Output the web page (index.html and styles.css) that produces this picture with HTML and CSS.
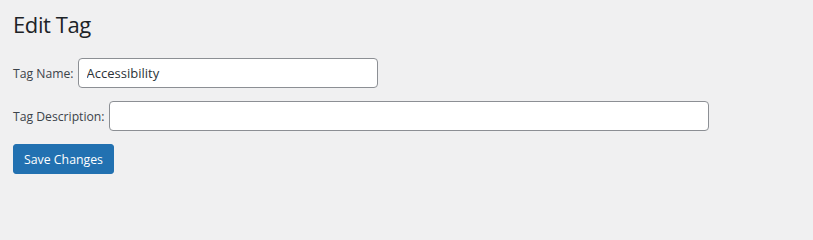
FILE: index.html
```html
<!DOCTYPE html>
<html>
<head>
<meta charset="utf-8">
<link rel="stylesheet" href="styles.css">
</head>
<body>
<div class="wrap">
  <h1 class="title">Edit Tag</h1>
  <form class="form">
    <div class="row">
      <label class="label" for="tag-name">Tag Name:</label>
      <input class="field field-name" id="tag-name" type="text" value="Accessibility">
    </div>
    <div class="row">
      <label class="label" for="tag-desc">Tag Description:</label>
      <input class="field field-desc" id="tag-desc" type="text" value="">
    </div>
    <div class="row">
      <button class="button-primary" type="button">Save Changes</button>
    </div>
  </form>
</div>
</body>
</html>
```

FILE: styles.css
```css
html, body {
  margin: 0;
  padding: 0;
  background: #f0f0f1;
}
body {
  font-family: "Open Sans", "Noto Sans", sans-serif;
  color: #3c434a;
  font-size: 13px;
}
.wrap {
  padding: 9px 13px 0 13px;
}
.title {
  margin: 0;
  font-size: 22px;
  font-weight: 400;
  letter-spacing: -0.4px;
  line-height: 30px;
  color: #1d2327;
}
.form {
  margin-top: 19px;
  display: flex;
  flex-direction: column;
  gap: 13px;
}
.row {
  display: flex;
  align-items: center;
  gap: 4px;
}
.label {
  font-size: 12.2px;
  color: #3c434a;
}
.field {
  box-sizing: border-box;
  height: 30px;
  border: 1px solid #8c8f94;
  border-radius: 4px;
  background: #fff;
  padding: 0 8px;
  font-family: inherit;
  font-size: 13px;
  color: #2c3338;
  outline: none;
}
.field-name {
  width: 300px;
}
.field-desc {
  width: 600px;
}
.button-primary {
  box-sizing: border-box;
  height: 30px;
  width: 101px;
  padding: 0 8px;
  background: #2271b1;
  border: 1px solid #2271b1;
  border-radius: 3px;
  color: #fff;
  font-family: inherit;
  font-size: 12.3px;
  cursor: pointer;
}
```
